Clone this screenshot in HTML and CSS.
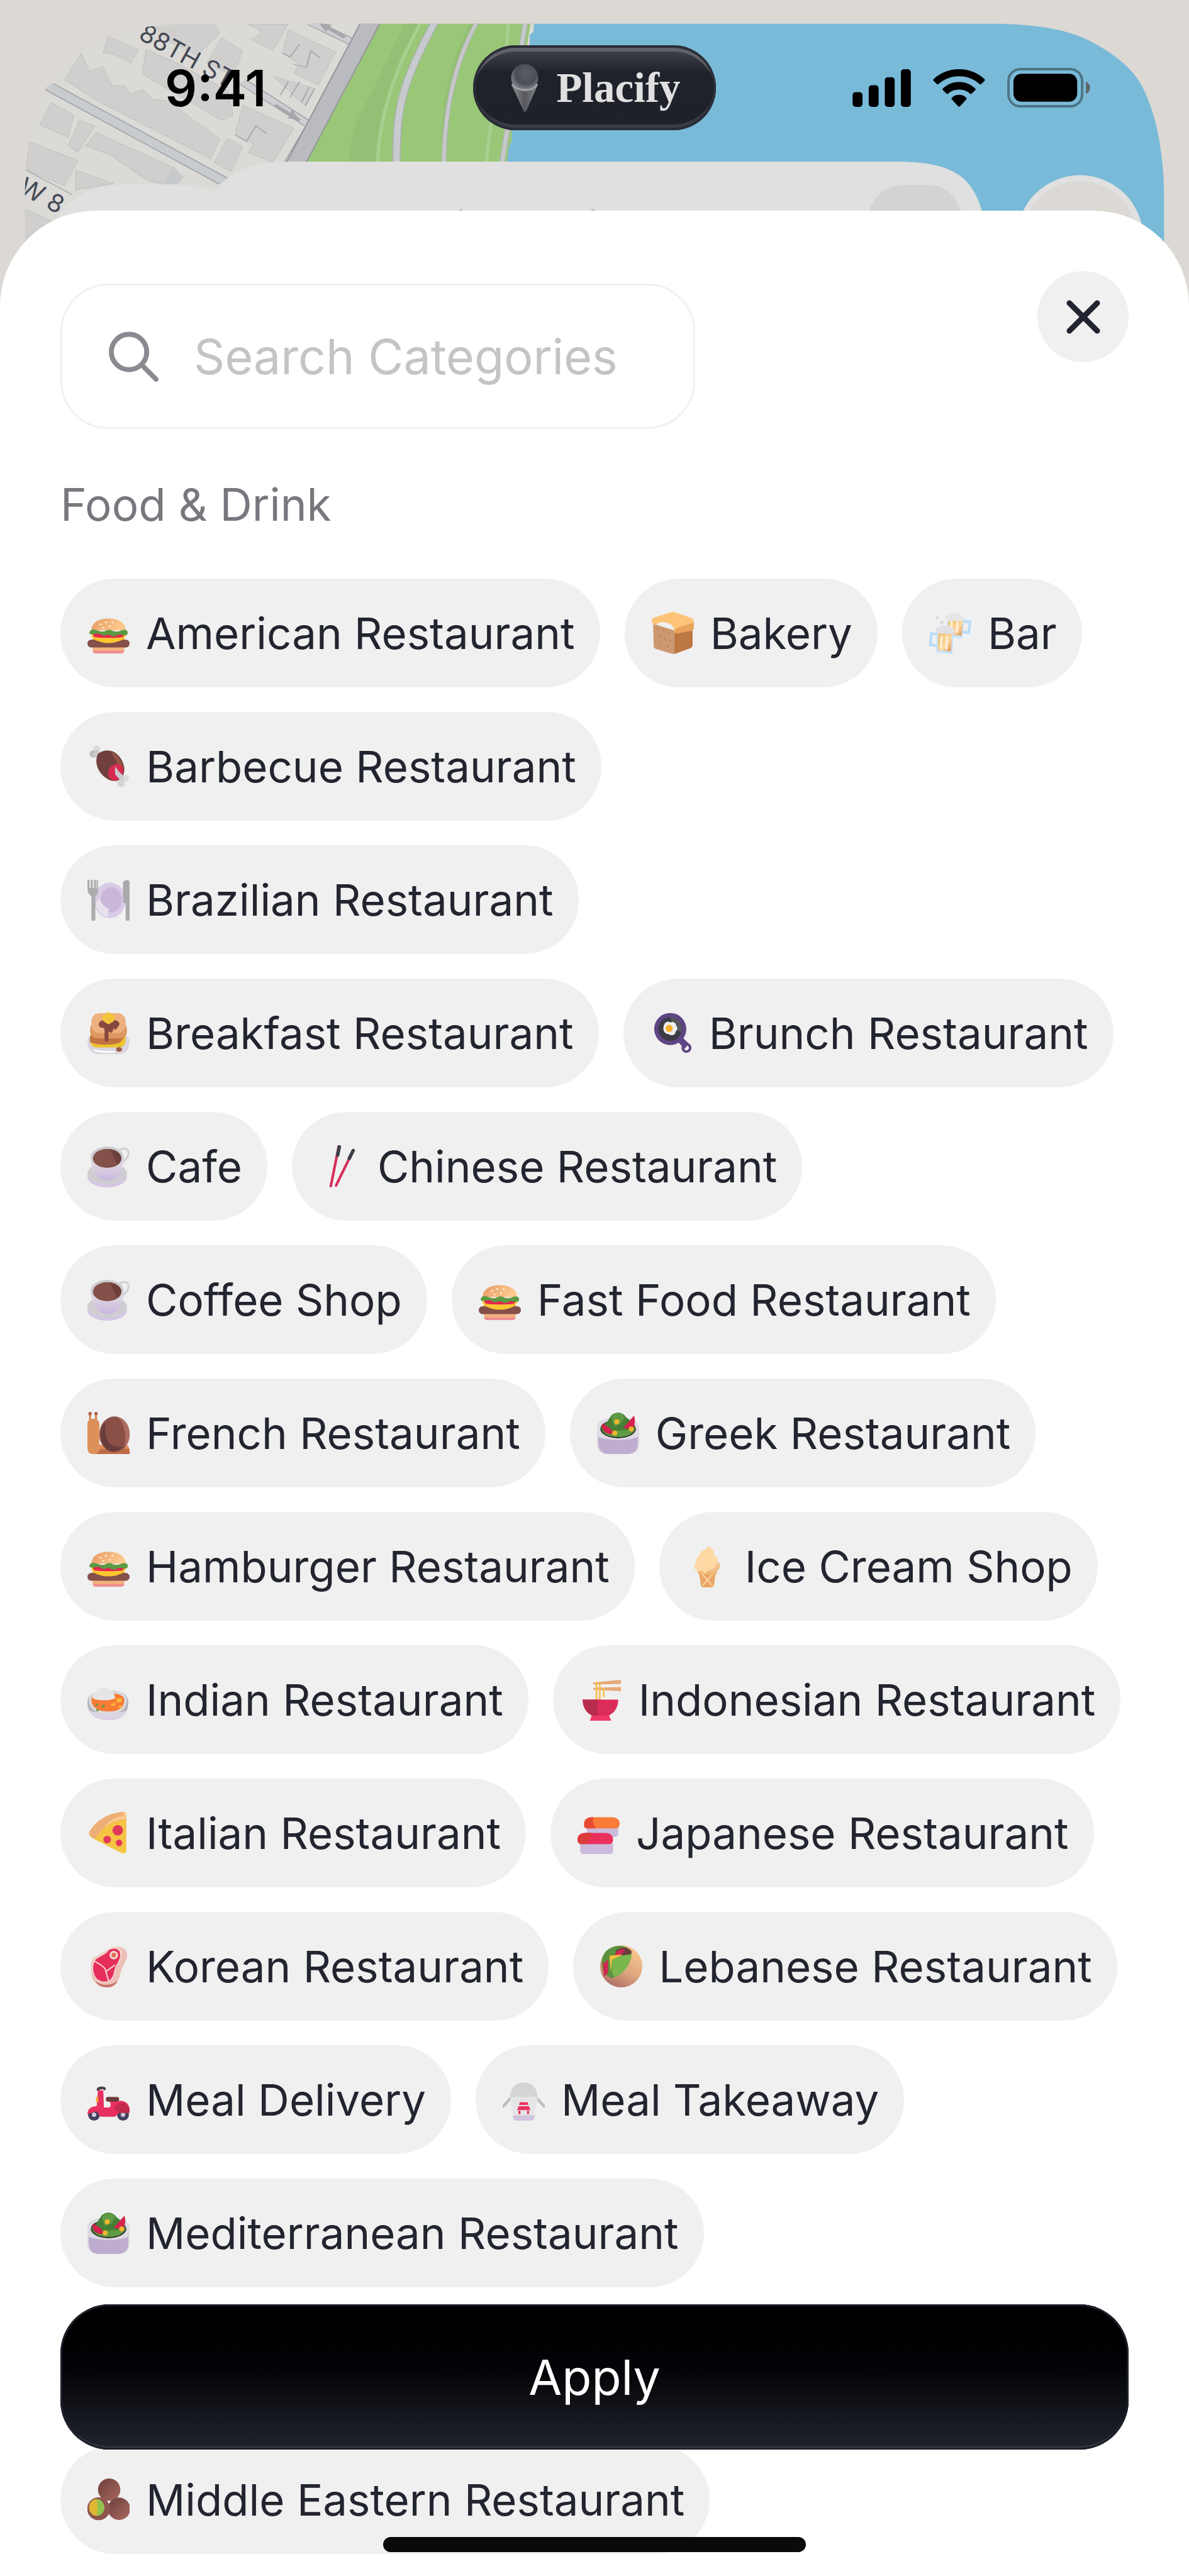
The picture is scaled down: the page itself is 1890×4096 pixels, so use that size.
FILE: index.html
```html
<!DOCTYPE html>
<html lang="en">
<head>
    <meta charset="UTF-8">
    <meta name="viewport" content="width=device-width, initial-scale=1.0">
    <title>Placify</title>
    <link rel="stylesheet" href="styles.css">
</head>

<body>
    <!-- Category icons -->
    <svg class="sprite" aria-hidden="true">
        <defs>
            <linearGradient id="bun" x1="0" y1="0" x2="1" y2="0.3">
                <stop offset="0" stop-color="#e59a66"/>
                <stop offset="1" stop-color="#fdc98c"/>
            </linearGradient>
            <linearGradient id="beer" x1="0" y1="0" x2="1" y2="1">
                <stop offset="0" stop-color="#f5b95a"/>
                <stop offset="0.6" stop-color="#fbd9a4"/>
                <stop offset="1" stop-color="#e08a4a"/>
            </linearGradient>
            <linearGradient id="china" x1="0" y1="0" x2="0" y2="1">
                <stop offset="0" stop-color="#e4e3e6"/>
                <stop offset="1" stop-color="#c9b8dc"/>
            </linearGradient>
            <linearGradient id="ball" x1="0" y1="0" x2="1" y2="1">
                <stop offset="0" stop-color="#6d3f3c"/>
                <stop offset="1" stop-color="#a9685e"/>
            </linearGradient>
            <linearGradient id="pita-shade" x1="0.8" y1="0" x2="0.3" y2="1">
                <stop offset="0" stop-color="#fdca92"/>
                <stop offset="0.6" stop-color="#dba47c"/>
                <stop offset="1" stop-color="#ae6c66"/>
            </linearGradient>
            <linearGradient id="cone-shade" x1="0" y1="0" x2="1" y2="0">
                <stop offset="0" stop-color="#8d8f92"/>
                <stop offset="0.5" stop-color="#55575c"/>
                <stop offset="1" stop-color="#85878a"/>
            </linearGradient>
            <radialGradient id="scoop-shade" cx="0.55" cy="0.35" r="0.65">
                <stop offset="0" stop-color="#5c5f66"/>
                <stop offset="0.6" stop-color="#4a4d56"/>
                <stop offset="1" stop-color="#8e9094"/>
            </radialGradient>
        </defs>
        <symbol id="burger" viewBox="0 0 32 32">
            <path d="M4 25h24v4a2.500 2.500 0 0 1-2.500 2.500h-19A2.500 2.500 0 0 1 4 29z" fill="#f2b27c"/>
            <path d="M4 29.500h24a2.500 2 0 0 1-2.500 2h-19a2.500 2 0 0 1-2.500-2z" fill="#f08c92"/>
            <path d="M4 19h24v3H4z" fill="#f4b92c"/>
            <path d="M3 17h26v2c-6 1-9 3-13 3S8 20 3 19z" fill="#ffc933"/>
            <path d="M3 15h26l-2 4c-4 1-17 1-22 0z" fill="#e5264f"/>
            <rect x="0" y="21" width="32" height="6" rx="3" fill="#85504a"/>
            <path d="M4 20.500h24c-4 2-8 3.200-12 3.200s-8-1.200-12-3.200z" fill="#fcc62f"/>
            <path d="M3 14C3 8.500 8 5 16 5s13 3.500 13 9z" fill="url(#bun)"/>
            <path d="M1.500 16c0-2 2-3 4-2.500 3 .5 4 1.500 6 1.500s3-1.500 5-1.500 3 1.500 5.500 1.500 4-1.500 6-1.500 3 1.500 2.500 3-2 1.500-4 1-3-.5-4.500.5-3 .5-5-.5-3.500 1-5 .5-3-2-5-1.500-5.500 1-5.500-.5z" fill="#5b9a43"/>
            <g fill="#ffe9cf"><circle cx="10" cy="9.500" r=".8"/><circle cx="14" cy="8" r=".8"/><circle cx="19" cy="8" r=".8"/><circle cx="17" cy="11" r=".8"/><circle cx="12" cy="12" r=".7"/></g>
        </symbol>
        <symbol id="bread" viewBox="0 0 32 32">
            <path d="M1 9l16 5v18l-3-.6L3 28c-1.200-.5-1.500-1.200-1.500-2.500z" fill="#cd9870"/>
            <path d="M17 14l14-4v15c0 1.500-.5 2-2 2.700L17 32z" fill="#bd7743"/>
            <path d="M0 6.500C0 5 1 4.500 2.500 4L14 .4c1.500-.5 2.500-.5 4 0L30 4.500c1.500.6 2 1.500 2 3V12c0 1.500-1.500 2-3 2.500l-8 1.500c-2 .5-4 .5-4-1.500 0-4-3-6-7-6.500-4-.6-5 .5-6.500 1.500C1.500 10.500 0 8.500 0 6.500z" fill="#fdc479"/>
            <path d="M17 14.500c0 1.500 1.500 2 4 1.500l8-1.500c1.500-.5 3-1 3-2.500V8c-4 2-13 2.500-15 6.500z" fill="#e9a25b"/>
            <g fill="#a46f5c"><circle cx="5" cy="13" r=".5"/><circle cx="9" cy="14" r=".5"/><circle cx="13" cy="16" r=".5"/><circle cx="6" cy="18" r=".5"/><circle cx="10" cy="20" r=".5"/><circle cx="14" cy="22" r=".5"/><circle cx="7" cy="23" r=".5"/><circle cx="12" cy="26" r=".5"/></g>
        </symbol>
        <symbol id="beers" viewBox="0 0 32 32">
            <path d="M25 7l6 .6-1 8-5-.4" fill="none" stroke="#b7dcfa" stroke-width="2"/>
            <path d="M14 4l13 1-2 15-12-1z" fill="#c5e3fb"/>
            <path d="M15 5l11 .5L24.500 18 14 17z" fill="url(#beer)"/>
            <path d="M17 7v9M21.500 7l-.5 9" stroke="#fff0dc" stroke-width="1.500"/>
            <path d="M12.500 5c-.5-2 1.500-3.500 3-3 1-2 4-2.500 5-.8 2-.8 4 .3 4 2 2 .3 2.500 3 .5 3.500-2 .5-3-.3-5 0-3 .4-6.500.8-7.500-1.700z" fill="#e6e6e6"/>
            <path d="M7 17l-5.500-.6L.9 25l5 .6" fill="none" stroke="#b7dcfa" stroke-width="2"/>
            <path d="M6 14l12.500 1.500L17.500 32 5 30.500z" fill="#c5e3fb"/>
            <path d="M7 16l10.500 1-1 13L6.500 29z" fill="url(#beer)"/>
            <path d="M9.500 18l-.5 10M13.500 18l-.5 10.500" stroke="#fff0dc" stroke-width="1.500"/>
            <path d="M5 15c-.8-2 1-3.600 2.500-3.200.5-2 3.500-2.300 4.700-1 2-1.200 4.300 0 4.600 1.500 2 0 3.200 2.500 1.500 4-2 1-4-.3-6 0s-6.500.7-7.300-1.300z" fill="#e2dfe5"/>
            <circle cx="6" cy="4.500" r="1.200" fill="#dadada"/><circle cx="9.500" cy="8" r="1.400" fill="#dadada"/>
        </symbol>
        <symbol id="meat" viewBox="0 0 32 32">
            <circle cx="7" cy="2.800" r="2.600" fill="#dcdcdc"/><circle cx="4.500" cy="6.500" r="2.800" fill="#bdbdbf"/>
            <path d="M7 3l6 5-4 4-5-5z" fill="#cccccd"/>
            <path d="M8 6.500C14 2 21 4 24.500 9c3.500 4.500 4.500 10 2.500 14-2 4-6 5-10 3.500C10.500 24 4 15 8 6.500z" fill="#6f403d"/>
            <path d="M18 4.500c4 1.500 9 8 9.500 13l-2 .5c-2-3-5-7-7.500-13.500z" fill="#945345"/>
            <ellipse cx="21.500" cy="20.500" rx="5.500" ry="6.500" transform="rotate(25 21.500 20.500)" fill="#d8294f"/>
            <path d="M21 16l3 4 5 5-3 3-5-6z" fill="#c9c9cb"/>
            <circle cx="29" cy="25" r="2.500" fill="#dadadb"/><circle cx="25.500" cy="29" r="2.800" fill="#d3d2d4"/>
        </symbol>
        <symbol id="plate" viewBox="0 0 32 32">
            <ellipse cx="17" cy="16.500" rx="12" ry="13.500" fill="#d9cae6"/>
            <ellipse cx="18" cy="16" rx="8" ry="9.500" fill="#c9b7d9"/>
            <path d="M6 18c1 6 4 9.500 9 11l1.500-6C12 21 10 18 9.500 15z" fill="#e6e1ea"/>
            <path d="M0 1h1.500v6h1V1H4v6h1V1h1.500v6h.5V1H8v9c0 2-1.500 3-2 3.500V31c0 1.500-3 1.500-3 0V13.500C1 12 0 10 0 7z" fill="#acabae"/>
            <path d="M27 3c1-2 5-3 5 0v28c0 1.500-3 1.500-3 0V19l-2-1z" fill="#aaa8ac"/>
        </symbol>
        <symbol id="pancakes" viewBox="0 0 32 32">
            <path d="M0 22c0-3 3-5 6-5h20c3 0 6 2 6 5 0 6-3 10-8 10H8c-5 0-8-4-8-10z" fill="#d9d5de"/>
            <rect x="2" y="15" width="27" height="12" rx="5" fill="#eec32e"/>
            <path d="M2 18h27l-4 5c-3 2-16 3-23 0z" fill="#c2733f"/>
            <rect x="2" y="8" width="28" height="12" rx="5" fill="#df9762"/>
            <rect x="3" y="1" width="26" height="15" rx="6" fill="#eeb07e"/>
            <path d="M9 8c2-3 13-3 15 0 1 2-1 3-2 5-1 1-2 0-2-1l-1 3c0 1-2 1-2 0l-1 0v6c0 2-3 2-3 0v-8c-1-2-3 0-4-2s0-2 0-3z" fill="#85483f"/>
            <path d="M11 3.500L16 0l5 3.500L20 7l-4 2.500L12 7z" fill="#f3c53b"/>
            <ellipse cx="24" cy="28.500" rx="2.300" ry="1.700" fill="#9c5a4b"/>
            <path d="M5 29c4 1.500 12 1.700 16 1.200" stroke="#fff" stroke-width="1.200" fill="none"/>
        </symbol>
        <symbol id="pan" viewBox="0 0 32 32">
            <path d="M19 21l4-3 6 6-3 4z" fill="#5f4584"/>
            <circle cx="27.300" cy="27.300" r="2.800" fill="none" stroke="#5f4584" stroke-width="2"/>
            <circle cx="15" cy="13" r="12.200" fill="#5f4584"/>
            <circle cx="15" cy="13" r="9" fill="#3c3c46"/>
            <path d="M15 4a9 9 0 0 1 8.500 12c-2-1-8-7-8.500-12z" fill="#55555d"/>
            <path d="M10 11c.5-3 3-4.500 5-3 2-1 4.500.5 4.500 2.500 1.500 1.500 1 3.500-.5 4.500 0 2.500-3 3.500-5 2-3 0-5-3-4-6z" fill="#eeedf0"/>
            <circle cx="14.200" cy="12.500" r="2.700" fill="#f6b02e"/>
        </symbol>
        <symbol id="coffee" viewBox="0 0 32 32">
            <ellipse cx="15" cy="24" rx="15" ry="8" fill="#d4c6e3"/>
            <ellipse cx="15" cy="21.500" rx="15" ry="8" fill="#cfcdd1"/>
            <path d="M24 4c4-3 8-1 7 3-.6 3-4 6.500-8 7.500" fill="none" stroke="#d3d2d4" stroke-width="1.600"/>
            <path d="M2.500 9h25c0 7-2 12-4.500 15.500-3 3-12 3-15 0C5 21 2.500 16 2.500 9z" fill="url(#china)"/>
            <ellipse cx="15" cy="9" rx="12.500" ry="8" fill="#cdcccf"/>
            <ellipse cx="15" cy="10" rx="10.800" ry="7.200" fill="#84504a"/>
            <path d="M17 3c6 .7 9 4 8.600 7.500-.4 2-2 3.800-3 4.200z" fill="#6c3f3b"/>
        </symbol>
        <symbol id="chopsticks" viewBox="0 0 32 32">
            <path d="M15 1L9 31" stroke="#d62f5c" stroke-width="2" stroke-linecap="round"/>
            <path d="M26 4L13 30.500" stroke="#d62f5c" stroke-width="2" stroke-linecap="round"/>
            <path d="M15.500 1.200L14.200 7.500M26 4l-3 6" stroke="#3b3f4a" stroke-width="2.600" stroke-linecap="round"/>
        </symbol>
        <symbol id="snail" viewBox="0 0 32 32">
            <path d="M2 1v6M6.500 1v6" stroke="#d58a5c" stroke-width="1.600"/>
            <circle cx="2" cy="1.300" r="1.300" fill="#b2604a"/><circle cx="6.500" cy="1.300" r="1.300" fill="#b2604a"/>
            <path d="M0 9c0-5 9-5 9 0v16h20c2 0 3.500 3 3 7H4c-3 0-4-2-4-5z" fill="#dd9058"/>
            <path d="M10 28h21.500c.5 1 .6 2 .5 4H7z" fill="#bd6a45"/>
            <ellipse cx="20.500" cy="17" rx="11.500" ry="13.500" fill="#8a5048"/>
            <path d="M23 3.800c6 1.500 9 7 9 13 0 5-2 9-4.500 11.500C30 20 29 10 23 3.800z" fill="#ad6c61"/>
            <path d="M13 8c-4 6-4 14 1 20 5 4 10 2 13-2-7 2-12-2-13-8-.3-4-.5-7-1-10z" fill="#693d3b"/>
        </symbol>
        <symbol id="salad" viewBox="0 0 32 32">
            <path d="M0 12c0-5 6-8 16-8s16 3 16 8v12c0 5-3 8-8 8H8c-5 0-8-3-8-8z" fill="#dddae1"/>
            <path d="M1 19c6 3 24 3 30 0v5c0 5-3 8-8 8H9c-5 0-8-3-8-8z" fill="#bfadd0"/>
            <ellipse cx="16" cy="13" rx="13.500" ry="7" fill="#35322f"/>
            <path d="M3 12c3-2 5-5 7-8 2-4 9-5 12 0 3 2 6 5 7 8 0 4-5 7-13 7S3 16 3 12z" fill="#457f35"/>
            <path d="M11 4c2-4 8-4 10 0l-3 5-5 2z" fill="#5e9b42"/>
            <path d="M6 16c5-2 17-2 22-3-1 4-5 6-12 6-5 0-8-1-10-3z" fill="#5e9b42"/>
            <path d="M4 9c3 1 7 4 8 6l-1 2c-4 0-8-3-7-8zM28 3l-8 9c3 1 7 1 8-1 1-3 1-6 0-8z" fill="#d3224e"/>
            <g fill="#f3b62c"><circle cx="15" cy="7.500" r="1.900"/><circle cx="26" cy="13" r="1.900"/><circle cx="13.500" cy="16" r="1.900"/></g>
        </symbol>
        <symbol id="icecream" viewBox="0 0 32 32">
            <path d="M9 16l2 14.500c.2 1 .8 1.500 2 1.500h6c1.200 0 1.800-.5 2-1.500L23 16z" fill="#eaa667"/>
            <path d="M8 18h16l-1 4H9z" fill="#f2b674"/>
            <path d="M12 22l8 9M20 22l-8 9" stroke="#fbd3a2" stroke-width="1"/>
            <path d="M16.500 0c.5 2 3 2 4 4s0 3 .5 4c2.500.5 3.500 3 2.500 4.500 2.500 1 3 5 0 6.500-3 1.500-5 .5-7.500.5-1 2-3 2.500-3.500 0-2 .5-5 0-6-1.500-1.300-2-.3-4.500 1.500-5-1-2 0-4 2-5C10 6 11 4.500 13 4c2-.6 3.500-2 3.500-4z" fill="#fcd9a2"/>
            <path d="M23.500 12.500c2.500 1 3 5 0 6.500-3 1.500-5 .5-7.500.5 5-1 7-4 7.500-7z" fill="#f1bf8d"/>
        </symbol>
        <symbol id="curry" viewBox="0 0 32 32">
            <path d="M0 18C0 12 6 9 16 9s15 3 15 9c0 9-5 13.500-15 13.500S0 27 0 18z" fill="#b5b4b9"/>
            <path d="M1 24c6 3 24 3 29 0-2 5-6 7.500-14 7.500S4 29 1 24z" fill="#dcd3e5"/>
            <path d="M1 16c0-5 6-7 15-7s14 2 14 7c0 7-5 11-14 11S1 23 1 16z" fill="#dadadd"/>
            <path d="M3 16c0-3 6-5 13-5s12 2 12 5c0 6-4 9-12 9S3 22 3 16z" fill="#f77a35"/>
            <path d="M4 15c0-5 4-8 8.500-8S21 10 21 15c-4 2-13 2-17 0z" fill="#e6e6e6"/>
            <g fill="#f8b737"><path d="M22 15h4v3h-4zM17 20l4-2v3zM23 21l3-1v3z"/></g>
            <g fill="#6f9a3d"><circle cx="7" cy="20" r="1"/><circle cx="12" cy="21" r="1.200"/><circle cx="7.500" cy="24" r=".9"/></g>
        </symbol>
        <symbol id="noodles" viewBox="0 0 32 32">
            <path d="M10 3l21-2v3L10 4.500zM10 7l21-.5v3L10 8.500z" fill="#e6a876"/>
            <path d="M12.500 3v14M15 4v13M18 7v7" stroke="#f9bf4c" stroke-width="1.300" fill="none"/>
            <path d="M2 16h27c0 6-3 10-7 12l1.500 4h-16L9 28c-4-2-7-6-7-12z" fill="#dc2c59"/>
            <path d="M2 16h12c-1 5-2 9 1 12H9c-4-2-7-6-7-12z" fill="#b82c4e"/>
            <path d="M9 28h13l1.500 4h-16z" fill="#f0386b"/>
        </symbol>
        <symbol id="pizza" viewBox="0 0 32 32">
            <path d="M1.500 15C7 6 16 1 27 0c2 0 2.500 1 2.500 3v26c0 2.500-2 3-4 2L4 20c-2-1.200-3.500-3-2.500-5z" fill="#f5c443"/>
            <path d="M1.500 15C7 6 16 1 27 0c2 0 2.500 1 2.500 3v3C18 7 11 12 6 20.500c-2-.6-5.500-3-4.500-5.500z" fill="#efae78"/>
            <path d="M27 0c2 0 2.500 1 2.500 3v2.500c-7 .5-13 3-17 7 3-6 9-9 15-9.500z" fill="#fbc98b"/>
            <g fill="#e2395b"><ellipse cx="23" cy="14" rx="4" ry="4"/><circle cx="15" cy="21" r="2.900"/><circle cx="24" cy="23.500" r="2.500"/></g>
        </symbol>
        <symbol id="sushi" viewBox="0 0 32 32">
            <path d="M7 11h24v5c0 2-1 3-3 3H9c-2 0-2-1-2-3z" fill="#cbbadb"/>
            <path d="M5 9c0-3 2-5 6-5h15c4 0 6 2 6 5 0 2-1 3.500-3 3.500H7c-2 0-2-1.500-2-3.500z" fill="#fa7a37"/>
            <path d="M5 9c0-3 2-5 6-5h1c-1 3 0 5 2 8.500H7c-2 0-2-1.500-2-3.500z" fill="#e84a36"/>
            <path d="M2 24h25v5c0 2-1 3-3 3H5c-2 0-3-1-3-3z" fill="#cbbadb"/>
            <path d="M0 21c0-3 2-5 6-5h15c4 0 6 2 6 5 0 2-1 3.500-3 3.500H3c-2 0-3-1.500-3-3.500z" fill="#e9305d"/>
            <path d="M0 21c0-3 2-5 6-5h5c-1 4-2 6-4 8.500H3c-2 0-3-1.500-3-3.500z" fill="#dd3c3a"/>
        </symbol>
        <symbol id="steak" viewBox="0 0 32 32">
            <path d="M18 2c4-2 11-1 12 4 .8 4-1.500 7-3 10s-2 6-3 9c-2 6-8 8-13 6-5-1-8-5-8-9 0-3-1-8 1-12z" fill="#ecc0b7"/>
            <path d="M6 27c4 4 12 4 17 0-2 5-8 6-12 4.500-2-.5-4-2-5-4.500z" fill="#c97570"/>
            <path d="M16 3c3-2.500 9-2.500 10 2s-2 8-3.500 11c-1.500 3-1 6-3 9-3 4-9 4-13 1-4-4-4-11-2-15 2-3 9-4 11.500-8z" fill="#f4d3cb"/>
            <path d="M16 4c3-2 8-2 8.700 2 .8 4-2 7.500-3.400 10.500-1.300 3-1 6-3 8.500-2.700 3.500-7.500 3.300-11 .6C4 22 3.600 16 5.500 12 7.500 8.500 13.500 8 16 4z" fill="#e62e5d"/>
            <path d="M5 12c4 2 9 5 9 8l2 7M14 20l7-5" stroke="#f6d2ca" stroke-width="1" fill="none"/>
            <circle cx="20" cy="7.500" r="2.500" fill="#dd6e55" stroke="#f5d8cd" stroke-width="1.500"/>
        </symbol>
        <symbol id="pita" viewBox="0 0 32 32">
            <ellipse cx="16" cy="16" rx="16" ry="16" fill="url(#pita-shade)"/>
            <path d="M4 5C10-1 20-1 24 5c-1 8-6 17-15 20C2 23-2 13 4 5z" fill="#5b9140"/>
            <path d="M12 4c4-3 9-3 12 1l-2 4-10 2z" fill="#6a3c3a"/>
            <path d="M11 7c2-3 5-5 8-4l-4 6zM2 14l4-3v10l-3 3z" fill="#cc2951"/>
            <path d="M7 8l10-1-8 5-1 8z" fill="#f4c13a"/>
            <path d="M9 11c5-3 10-4 15-4-1 8-6 14-12 17-3 0-4-6-3-13z" fill="#79b74c"/>
        </symbol>
        <symbol id="scooter" viewBox="0 0 32 32">
            <circle cx="5" cy="27.500" r="4.500" fill="#43405c"/><circle cx="27" cy="27.500" r="4.500" fill="#43405c"/>
            <circle cx="5" cy="27.500" r="1.700" fill="#cfcbd6"/><circle cx="27" cy="27.500" r="1.700" fill="#cfcbd6"/>
            <path d="M8 8.500c0-1.500 5-2 5-.5" stroke="#4a4148" stroke-width="2" fill="none" stroke-linecap="round"/>
            <path d="M8 9h4l.5 13h4c2-1 1-4 0-5h10c4 1 6 4 5.500 9h-8l-3 3H10l-3-4-7 2c0-4 3-6 7-6z" fill="#ea3060"/>
            <path d="M20 23c2-5 8-6 11-2 1 2 1 3 1 5h-8z" fill="#c22b4e"/>
            <rect x="14" y="14" width="10" height="3.500" rx="1.500" fill="#6c3c38"/>
            <rect x="6.500" y="14" width="1.800" height="4" fill="#f6a935"/>
        </symbol>
        <symbol id="takeout" viewBox="0 0 32 32">
            <path d="M6 15l-5.500 6M26 15l5.500 6" stroke="#bcbcbe" stroke-width="2" stroke-linecap="round"/>
            <path d="M5.500 15C5.500 7 10 3 16 3s10.500 4 10.500 12z" fill="#d4d4d5"/>
            <path d="M5.500 14h21L24 29.500c-.2 1.700-1 2.500-2.500 2.500h-11C9 32 8.200 31 8 29.500z" fill="#e5e4e6"/>
            <path d="M7.600 28h16.800l-.4 2c-.2 1.300-1 2-2.500 2h-11c-1.500 0-2.300-.7-2.500-2z" fill="#d2c3e0"/>
            <path d="M13 18h6l.5 2h-7zM12 21h8l1 3H11zM12 24.500h1.500V27H12zM18.500 24.500H20V27h-1.500z" fill="#e9305d"/>
        </symbol>
        <symbol id="falafel" viewBox="0 0 32 32">
            <circle cx="16.500" cy="8.500" r="8.500" fill="url(#ball)"/>
            <circle cx="24" cy="23" r="8.500" fill="url(#ball)"/>
            <circle cx="8.500" cy="23" r="8.700" fill="#8d554d"/>
            <ellipse cx="7" cy="22" rx="5.800" ry="6.300" fill="#e0b732"/>
            <path d="M7 15.700a5.800 6.300 0 0 1 0 12.600c1-4 1-8 0-12.600z" fill="#90c34e"/>
        </symbol>
    </svg>

    <div class="screen">
        <!-- Map behind the sheets -->
        <svg class="map" viewBox="0 0 1920 560" aria-hidden="true">
            <defs>
                <clipPath id="phone">
                    <path d="M320 38C240 39 190 48 149 72C115 91 92 112 78 135C54 180 40 240 40 330V560H1880V330C1880 240 1866 180 1842 135C1828 112 1805 91 1771 72C1730 48 1680 39 1600 38Z"/>
                </clipPath>
            </defs>
            <g clip-path="url(#phone)">
                <rect x="40" y="38" width="1840" height="522" fill="#dbdad6"/>
                <g transform="scale(.6122 .3571)">
                    <g fill="#d0cfcd" stroke="#b4b6ba" stroke-width="1.500">
                        <path d="M285 165L365 225 345 285 300 245 272 238Z"/>
                        <path d="M400 100L560 100 580 150 520 250 440 180Z"/>
                        <path d="M215 240L235 325 270 300 295 385 330 390 345 425 375 405 405 450 440 455 580 630 555 718 255 455 170 360Z"/>
                        <path d="M385 225L460 280 600 410 615 520 585 545 510 470 375 335Z"/>
                        <path d="M585 170L640 230 625 300 600 330 545 285Z"/>
                        <path d="M655 110L760 110 720 230 665 180 690 145Z"/>
                        <path d="M760 135L885 235 840 385 775 330 790 290 745 240Z"/>
                        <path d="M640 475L775 580 720 735 655 690 670 650 620 610Z"/>
                        <path d="M720 345L830 400 805 475 780 440Z"/>
                        <path d="M135 465L195 520 180 620 105 565Z"/>
                        <path d="M210 545L250 570 205 690 180 660Z"/>
                        <path d="M255 600L460 760 480 800 440 835 390 818 290 700 225 660Z"/>
                        <path d="M75 640L205 725 170 840 70 770Z"/>
                        <path d="M200 770L300 830 200 860Z"/>
                        <path d="M600 625L640 665 610 775 565 735Z"/>
                        <path d="M64 945L150 1010 100 1100 64 1100Z"/>
                    </g>
                    <path d="M745 240L765 258 790 200 M775 290L808 305 820 230 845 262 M620 610L650 640 675 570 705 605 M760 370L740 430 M790 370L765 440 M830 400L805 480 M815 395L795 465" fill="none" stroke="#9fa1a8" stroke-width="3"/>
                    <path d="M455 760L485 800 470 833 430 833Z" fill="#c7cacd"/>
                    <!-- streets -->
                    <path d="M128 390L590 820" stroke="#9b9da3" stroke-width="38"/>
                    <path d="M128 390L590 820" stroke="#c9cccf" stroke-width="31"/>
                    <path d="M640 370L812 560" stroke="#9b9da3" stroke-width="28"/>
                    <path d="M640 370L812 560" stroke="#cdcfd2" stroke-width="22"/>
                    <path d="M820 100L935 195" stroke="#9b9da3" stroke-width="30"/>
                    <path d="M820 100L935 195" stroke="#cdcfd2" stroke-width="24"/>
                    <path d="M725 475L790 545M850 110L910 170" stroke="#a5a7ab" stroke-width="12"/>
                    <path d="M790 545L760 535 770 495ZM842 105L875 112 860 145Z" fill="#a5a7ab"/>
                    <path d="M925 205L820 540M805 575L750 735M64 765L190 880" stroke="#9b9da3" stroke-width="3"/>
                    <!-- park -->
                    <path d="M1000 100H1400L1340 740H800Z" fill="#99c777"/>
                    <path d="M1068 100C1040 210 1020 270 980 420C930 560 925 640 920 740H990C1000 560 1020 450 1060 300L1105 100ZM1240 100C1190 270 1165 450 1165 630L1180 640C1180 480 1200 300 1255 100Z" fill="#94c075"/>
                    <path d="M1110 100C1040 320 1000 520 996 740M1340 100C1340 300 1290 500 1283 740" fill="none" stroke="#a9cf90" stroke-width="9"/>
                    <path d="M1147 100C1060 380 1045 480 1046 740" fill="none" stroke="#acb0b4" stroke-width="22"/>
                    <path d="M1147 100C1060 380 1045 480 1046 740" fill="none" stroke="#c8cbce" stroke-width="17"/>
                    <path d="M1258 100C1200 280 1172 500 1171 740" fill="none" stroke="#b0b4b4" stroke-width="13"/>
                    <path d="M1258 100C1200 280 1172 500 1171 740" fill="none" stroke="#c6c8ca" stroke-width="9"/>
                    <path d="M1408 100V140L1397 160V215L1350 590V640L1342 660 1337 740V1568H3200V0H1408Z" fill="#79bad8"/>
                    <path d="M1386 100C1370 280 1345 500 1324 740" fill="none" stroke="#b0b4b4" stroke-width="15"/>
                    <path d="M1386 100C1370 280 1345 500 1324 740" fill="none" stroke="#c6c8ca" stroke-width="10"/>
                    <!-- avenue along the park -->
                    <path d="M978 100L780 740" stroke="#93959b" stroke-width="53"/>
                    <path d="M978 100L780 740" stroke="#b9bbbe" stroke-width="46"/>
                </g>
                <text class="map-label" transform="translate(222 62) rotate(29)">88TH ST</text>
                <text class="map-label" transform="translate(28 310) rotate(29)">W 8</text>
            </g>
            <path d="M80 370C110 315 150 298 210 298H270C300 298 325 302 346 310C372 275 410 261 470 261H1445C1540 261 1570 285 1587 345V400H80Z" fill="#e0e0e0"/>
            <path d="M1402 345C1412 312 1432 299 1462 299H1500C1528 299 1545 318 1553 345Z" fill="#d3d3d1"/>
            <circle cx="1744" cy="385" r="97" fill="#dcd8d4" stroke="#e0e0e0" stroke-width="10"/>
            <path d="M742 338h4v3h-4zM955 338h5v3h-5z" fill="#b4b4b6"/>
        </svg>

        <header class="status-bar">
            <span class="time">9:41</span>
            <div class="brand">
                <svg class="brand-icon" viewBox="0 0 45 79" aria-hidden="true">
                    <path d="M1 34h43L26 75c-1.500 4-4.500 4-6 0z" fill="url(#cone-shade)"/>
                    <circle cx="22.500" cy="22.500" r="22" fill="url(#scoop-shade)"/>
                    <path d="M2 33c6 12 34 14 41 0" fill="none" stroke="#a2a3a5" stroke-width="3"/>
                </svg>
                <span>Placify</span>
            </div>
            <div class="indicators">
                <svg class="signal" viewBox="0 0 94 61" aria-label="Signal">
                    <rect x="0" y="37" width="16" height="24" rx="5"/>
                    <rect x="26" y="26" width="16" height="35" rx="5"/>
                    <rect x="52" y="13" width="16" height="48" rx="5"/>
                    <rect x="78" y="0" width="16" height="61" rx="5"/>
                </svg>
                <svg class="wifi" viewBox="0 0 84 61" aria-label="Wi-Fi">
                    <path d="M42 0C58 0 73 6 83 16c1 1 1 2 0 3l-5 5c-1 1-2 1-3 0C66 16 55 11.500 42 11.500S18 16 9 24c-1 1-2 1-3 0l-5-5c-1-1-1-2 0-3C11 6 26 0 42 0z"/>
                    <path d="M42 20.500c10 0 19 4 26 10.500 1 1 1 2 0 3l-5.500 5.500c-1 1-2 1-3 0C55 35 49 33 42 33s-13 2-17.500 6.500c-1 1-2 1-3 0L16 34c-1-1-1-2 0-3 7-6.500 16-10.500 26-10.500z"/>
                    <path d="M42 41.500c4.500 0 8.500 1.500 11.500 4.500 1 1 1 2 0 3L43.500 60c-1 1-2 1-3 0L30.500 49c-1-1-1-2 0-3 3-3 7-4.500 11.500-4.500z"/>
                </svg>
                <svg class="battery" viewBox="0 0 135 64" aria-label="Battery">
                    <rect x="2" y="2" width="119" height="60" rx="19" fill="none" stroke="#4c7584" stroke-width="4"/>
                    <rect x="10" y="9.500" width="103" height="45" rx="13"/>
                    <path d="M127 22c9 4 9 16 0 20z" fill="#5d666c"/>
                </svg>
            </div>
        </header>

        <main class="sheet">
            <div class="sheet-top">
                <label class="search">
                    <svg class="search-icon" viewBox="0 0 80 81" aria-hidden="true">
                        <circle cx="32.500" cy="33" r="28.500"/>
                        <path d="M53 54L76 77"/>
                    </svg>
                    <input type="text" name="search" placeholder="Search Categories" aria-label="Search Categories">
                </label>
                <button type="button" class="close" aria-label="Close">
                    <svg viewBox="0 0 55 55" aria-hidden="true"><path d="M5 5L50 50M50 5L5 50"/></svg>
                </button>
            </div>

            <h2>Food &amp; Drink</h2>
            <div class="chips">
                <button type="button" class="chip"><svg><use href="#burger"/></svg>American Restaurant</button>
                <button type="button" class="chip"><svg><use href="#bread"/></svg>Bakery</button>
                <button type="button" class="chip"><svg><use href="#beers"/></svg>Bar</button>
                <button type="button" class="chip"><svg><use href="#meat"/></svg>Barbecue Restaurant</button>
                <button type="button" class="chip"><svg><use href="#plate"/></svg>Brazilian Restaurant</button>
                <button type="button" class="chip"><svg><use href="#pancakes"/></svg>Breakfast Restaurant</button>
                <button type="button" class="chip"><svg><use href="#pan"/></svg>Brunch Restaurant</button>
                <button type="button" class="chip"><svg><use href="#coffee"/></svg>Cafe</button>
                <button type="button" class="chip"><svg><use href="#chopsticks"/></svg>Chinese Restaurant</button>
                <button type="button" class="chip"><svg><use href="#coffee"/></svg>Coffee Shop</button>
                <button type="button" class="chip"><svg><use href="#burger"/></svg>Fast Food Restaurant</button>
                <button type="button" class="chip"><svg><use href="#snail"/></svg>French Restaurant</button>
                <button type="button" class="chip"><svg><use href="#salad"/></svg>Greek Restaurant</button>
                <button type="button" class="chip"><svg><use href="#burger"/></svg>Hamburger Restaurant</button>
                <button type="button" class="chip"><svg><use href="#icecream"/></svg>Ice Cream Shop</button>
                <button type="button" class="chip"><svg><use href="#curry"/></svg>Indian Restaurant</button>
                <button type="button" class="chip"><svg><use href="#noodles"/></svg>Indonesian Restaurant</button>
                <button type="button" class="chip"><svg><use href="#pizza"/></svg>Italian Restaurant</button>
                <button type="button" class="chip"><svg><use href="#sushi"/></svg>Japanese Restaurant</button>
                <button type="button" class="chip"><svg><use href="#steak"/></svg>Korean Restaurant</button>
                <button type="button" class="chip"><svg><use href="#pita"/></svg>Lebanese Restaurant</button>
                <button type="button" class="chip"><svg><use href="#scooter"/></svg>Meal Delivery</button>
                <button type="button" class="chip"><svg><use href="#takeout"/></svg>Meal Takeaway</button>
                <button type="button" class="chip"><svg><use href="#salad"/></svg>Mediterranean Restaurant</button>
                <!-- empty row under the Apply button -->
                <div class="row-gap"></div>
                <button type="button" class="chip"><svg><use href="#falafel"/></svg>Middle Eastern Restaurant</button>
            </div>
        </main>

        <div class="dock">
            <button type="button" class="apply">Apply</button>
            <div class="home-indicator"></div>
        </div>
    </div>
</body>
</html>
```
FILE: styles.css
```css
body {
    margin: 0;
    font-family: Inter, 'Liberation Sans', sans-serif;
    color: #22252f;
    background-color: #dcd8d4;
}

button, input {
    font-family: inherit;
    color: inherit;
}

button {
    border: none;
    padding: 0;
}

.sprite {
    position: absolute;
    width: 0;
    height: 0;
}

.screen {
    position: relative;
    display: flex;
    flex-direction: column;
    height: 100vh;
    overflow: hidden;
}

.map {
    position: absolute;
    top: 0;
    left: 0;
    width: 100%;
}

.map-label {
    font-size: 40px;
    fill: #454955;
}

/* Status bar */
.status-bar {
    position: relative;
    display: grid;
    grid-template-columns: 1fr auto 1fr;
    align-items: center;
    flex: none;
    padding: 72px 156px 128px;
}

.time {
    margin-left: 106px;
    font-size: 80px;
    font-weight: 600;
    line-height: 80px;
    color: #000;
}

.brand {
    display: flex;
    align-items: center;
    gap: 28px;
    box-sizing: border-box;
    height: 135px;
    padding: 0 56px 0 60px;
    border-radius: 68px;
    font-family: 'Liberation Serif', serif;
    font-size: 67px;
    font-weight: 700;
    color: #e0e0e0;
    background: linear-gradient(#484a52, #1f212b 32%, #1e202a);
    box-shadow: inset 0 0 0 4px #2b2d37, inset 0 10px 0 #606268, inset 0 -9px 0 #393b45;
}

.brand-icon {
    width: 44px;
    height: 78px;
}

.indicators {
    display: flex;
    align-items: center;
    justify-content: flex-end;
    gap: 35px;
}

.signal {
    width: 93px;
    height: 60px;
}

.wifi {
    width: 83px;
    height: 60px;
}

.battery {
    width: 133px;
    height: 63px;
}

/* Sheet */
.sheet {
    position: relative;
    flex: 1;
    padding: 96px 96px 0;
    border-radius: 152px 152px 0 0;
    background-color: #fff;
}

.sheet-top {
    display: flex;
    justify-content: space-between;
    align-items: flex-start;
}

.search {
    display: flex;
    align-items: center;
    gap: 56px;
    flex: 0 1 1009px;
    min-width: 0;
    box-sizing: border-box;
    height: 231px;
    margin-top: 20px;
    padding: 0 74px;
    border: 3px solid #f1f1f1;
    border-radius: 76px;
}

.search-icon {
    flex: none;
    width: 79px;
    height: 80px;
    fill: none;
    stroke: #8a8b90;
    stroke-width: 8;
    stroke-linecap: round;
}

.search input {
    flex: 1;
    min-width: 0;
    padding: 0;
    border: none;
    outline: none;
    font-size: 77px;
    line-height: 96px;
    background: none;
}

.search input::placeholder {
    color: #c4c4c4;
}

.close {
    display: flex;
    align-items: center;
    justify-content: center;
    flex: none;
    width: 145px;
    height: 145px;
    border-radius: 50%;
    background-color: #f0f0f0;
}

.close svg {
    width: 54px;
    height: 54px;
    fill: none;
    stroke: #22252f;
    stroke-width: 9;
    stroke-linecap: round;
}

h2 {
    margin: 80px 0 78px;
    font-size: 71px;
    font-weight: 400;
    line-height: 80px;
    color: #77787d;
}

.chips {
    display: flex;
    flex-wrap: wrap;
    gap: 39px;
}

.chip {
    display: flex;
    align-items: center;
    gap: 26px;
    height: 173px;
    padding: 0 40px 0 43px;
    border-radius: 87px;
    font-size: 69px;
    white-space: nowrap;
    background-color: #f0f0f0;
}

.chip svg {
    width: 67px;
    height: 67px;
}

.row-gap {
    width: 100%;
    height: 173px;
}

/* Bottom dock */
.dock {
    position: absolute;
    right: 0;
    bottom: 0;
    left: 0;
    padding: 0 96px 38px;
}

.apply {
    width: 100%;
    height: 231px;
    border-radius: 78px;
    font-size: 77px;
    color: #fff;
    background: linear-gradient(#000 20%, #030409 45%, #0d0e11 62%, #171921 80%, #20222d);
    box-shadow: inset 0 0 0 3px #1d2029, inset 0 -5px 0 #393b44;
}

.home-indicator {
    width: 672px;
    height: 24px;
    margin: 139px auto 0;
    border-radius: 12px;
    background-color: #0a0a0c;
}
```
